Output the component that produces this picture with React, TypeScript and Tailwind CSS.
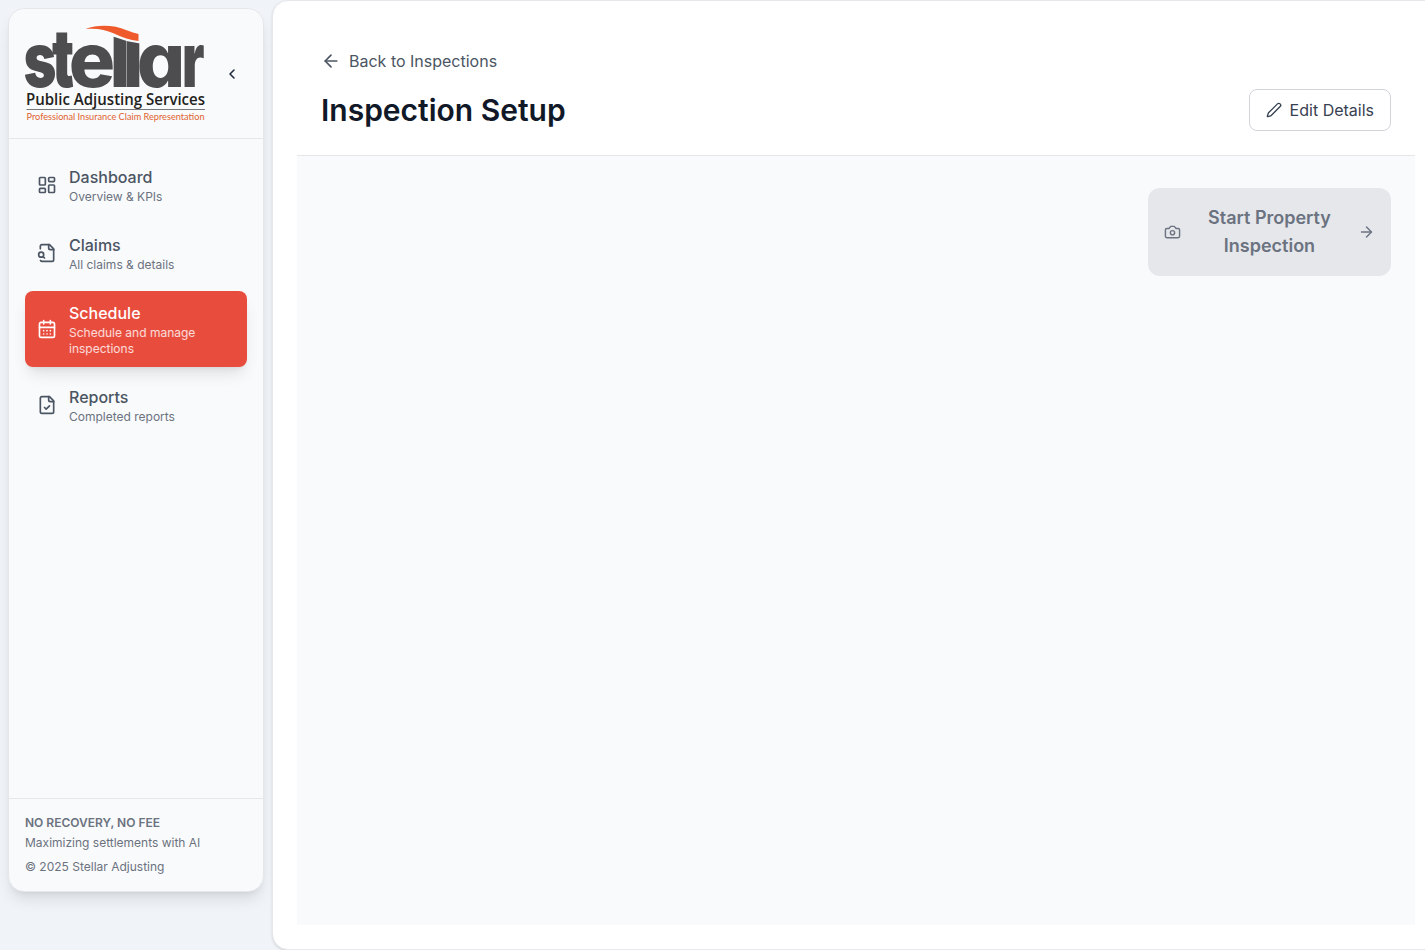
import type { ReactNode } from "react";
import { ArrowLeft, ArrowRight, CalendarDays, ChevronLeft, LayoutDashboard } from "lucide-react";

type IconProps = { className?: string; children?: ReactNode };

function StrokeIcon({ className, children }: IconProps) {
  return (
    <svg
      className={className}
      viewBox="0 0 24 24"
      fill="none"
      stroke="currentColor"
      strokeWidth="2"
      strokeLinecap="round"
      strokeLinejoin="round"
    >
      {children}
    </svg>
  );
}

function FileSearchIcon({ className }: IconProps) {
  return (
    <StrokeIcon className={className}>
      <path d="M14 2v4a2 2 0 0 0 2 2h4" />
      <path d="M4.268 21a2 2 0 0 0 1.727 1H18a2 2 0 0 0 2-2V7l-5-5H6a2 2 0 0 0-2 2v3" />
      <path d="m9 18-1.5-1.5" />
      <circle cx="5" cy="14" r="3" />
    </StrokeIcon>
  );
}

function FileCheckIcon({ className }: IconProps) {
  return (
    <StrokeIcon className={className}>
      <path d="M15 2H6a2 2 0 0 0-2 2v16a2 2 0 0 0 2 2h12a2 2 0 0 0 2-2V7Z" />
      <path d="M14 2v4a2 2 0 0 0 2 2h4" />
      <path d="m9 15 2 2 4-4" />
    </StrokeIcon>
  );
}

function CameraIcon({ className }: IconProps) {
  return (
    <StrokeIcon className={className}>
      <path d="M14.5 4h-5L7 7H4a2 2 0 0 0-2 2v9a2 2 0 0 0 2 2h16a2 2 0 0 0 2-2V9a2 2 0 0 0-2-2h-3l-2.5-3z" />
      <circle cx="12" cy="13" r="3" />
    </StrokeIcon>
  );
}

function PencilIcon({ className }: IconProps) {
  return (
    <StrokeIcon className={className}>
      <path d="M21.174 6.812a1 1 0 0 0-3.986-3.987L3.842 16.174a2 2 0 0 0-.5.83l-1.321 4.352a.5.5 0 0 0 .623.622l4.353-1.32a2 2 0 0 0 .83-.497z" />
    </StrokeIcon>
  );
}

function Logo() {
  return (
    <svg className="h-[97px] w-[181px] shrink-0 overflow-visible" viewBox="0 0 181 97">
      <text
        y="62"
        fill="#4d4d4f"
        className="font-['Inter'] text-[76px] font-extrabold [font-feature-settings:'cv11']"
      >
        <tspan x="-1.5" textLength="33" lengthAdjust="spacingAndGlyphs" className="font-black">s</tspan>
        <tspan x="27" textLength="22" lengthAdjust="spacingAndGlyphs" className="text-[80px] font-black">t</tspan>
        <tspan x="43.8" textLength="46.5" lengthAdjust="spacingAndGlyphs">e</tspan>
        <tspan x="84.500" textLength="21" lengthAdjust="spacingAndGlyphs">l</tspan>
        <tspan x="97.500" textLength="21" lengthAdjust="spacingAndGlyphs">l</tspan>
        <tspan x="111.8" textLength="48.5" lengthAdjust="spacingAndGlyphs">a</tspan>
        <tspan x="157" textLength="22.500" lengthAdjust="spacingAndGlyphs" className="font-black">r</tspan>
      </text>
      <path d="M85 -2H118V19L102.500 16.200L88 11.500Z" fill="#f9fafb" />
      <path
        d="M60.5 4C73 -1 90 0 101 5C106 7 110 8 113.5 9V16C105 15 96 12 89 8.5C80 4.5 72 3 60.5 4Z"
        fill="#ee5a2b"
      />
      <text
        x="1"
        y="79.5"
        fill="#231f20"
        textLength="179"
        lengthAdjust="spacingAndGlyphs"
        className="font-['Open_Sans'] text-[16.5px] font-semibold"
      >
        Public Adjusting Services
      </text>
      <rect x="1.5" y="84" width="178.5" height="1" fill="#77787b" />
      <text
        x="1.5"
        y="95"
        fill="#e0622f"
        textLength="178"
        lengthAdjust="spacingAndGlyphs"
        className="font-['Lato'] text-[9.2px]"
      >
        Professional Insurance Claim Representation
      </text>
    </svg>
  );
}

type NavItemProps = { icon: ReactNode; title: string; detail: string; active?: boolean };

function NavItem({ icon, title, detail, active = false }: NavItemProps) {
  return (
    <a
      className={
        active
          ? "flex items-center gap-3 rounded-lg bg-[#e84c3d] px-3 py-2.5 text-white shadow-lg"
          : "flex items-center gap-3 rounded-lg px-3 py-2.5 text-[#4b5563]"
      }
    >
      {icon}
      <div className="min-w-0 flex-1">
        <div className="text-base font-medium">{title}</div>
        <div className={active ? "text-xs text-white/80" : "text-xs text-[#6b7280]"}>{detail}</div>
      </div>
    </a>
  );
}

function Sidebar() {
  return (
    <aside className="m-2 flex h-[884px] w-64 shrink-0 flex-col rounded-2xl border border-[#e5e7eb] bg-[#f9fafb] shadow-lg">
      <div className="flex items-center justify-between border-b border-[#e5e7eb] p-4">
        <Logo />
        <button className="mr-[7px] flex size-4 items-center justify-center text-[#1e293b]">
          <ChevronLeft className="size-4 shrink-0" strokeWidth={2.3} />
        </button>
      </div>
      <nav className="flex flex-1 flex-col gap-2 p-4">
        <NavItem icon={<LayoutDashboard className="size-5 shrink-0" />} title="Dashboard" detail="Overview & KPIs" />
        <NavItem icon={<FileSearchIcon className="size-5 shrink-0" />} title="Claims" detail="All claims & details" />
        <NavItem
          icon={<CalendarDays className="size-5 shrink-0" />}
          title="Schedule"
          detail="Schedule and manage inspections"
          active
        />
        <NavItem icon={<FileCheckIcon className="size-5 shrink-0" />} title="Reports" detail="Completed reports" />
      </nav>
      <div className="border-t border-[#e5e7eb] p-4 text-xs text-[#6b7280]">
        <p className="font-semibold">NO RECOVERY, NO FEE</p>
        <p className="mt-1">Maximizing settlements with AI</p>
        <p className="mt-2">© 2025 Stellar Adjusting</p>
      </div>
    </aside>
  );
}

export default function App() {
  return (
    <div className="flex h-[950px] w-full overflow-hidden bg-[#f0f4f9] font-['Inter',sans-serif]">
      <Sidebar />
      <main className="flex h-[950px] w-[1168px] shrink-0 flex-col rounded-2xl border border-[#e5e7eb] bg-white p-6 shadow-sm">
        <header className="border-b border-[#e5e7eb] p-6">
          <a className="flex items-center gap-2 text-base text-[#4b5563]">
            <ArrowLeft className="size-5" />
            Back to Inspections
          </a>
          <div className="mt-4 flex items-center justify-between">
            <h1 className="text-3xl font-semibold text-[#111827]">Inspection Setup</h1>
            <button className="flex items-center gap-2 rounded-lg border border-[#d1d5db] bg-white px-4 py-2 text-base text-[#374151]">
              <PencilIcon className="size-4" />
              Edit Details
            </button>
          </div>
        </header>
        <section className="flex flex-1 items-start justify-end bg-[#f9fafb] px-6 py-8">
          <button
            disabled
            className="flex w-[243px] items-center rounded-xl bg-[#e5e7eb] px-4 py-4 text-lg font-semibold text-[#6b7280]"
          >
            <CameraIcon className="h-5 w-[17px] shrink-0" />
            <span className="flex-1 px-4 text-center">Start Property Inspection</span>
            <ArrowRight className="h-5 w-[17px] shrink-0" />
          </button>
        </section>
      </main>
    </div>
  );
}
